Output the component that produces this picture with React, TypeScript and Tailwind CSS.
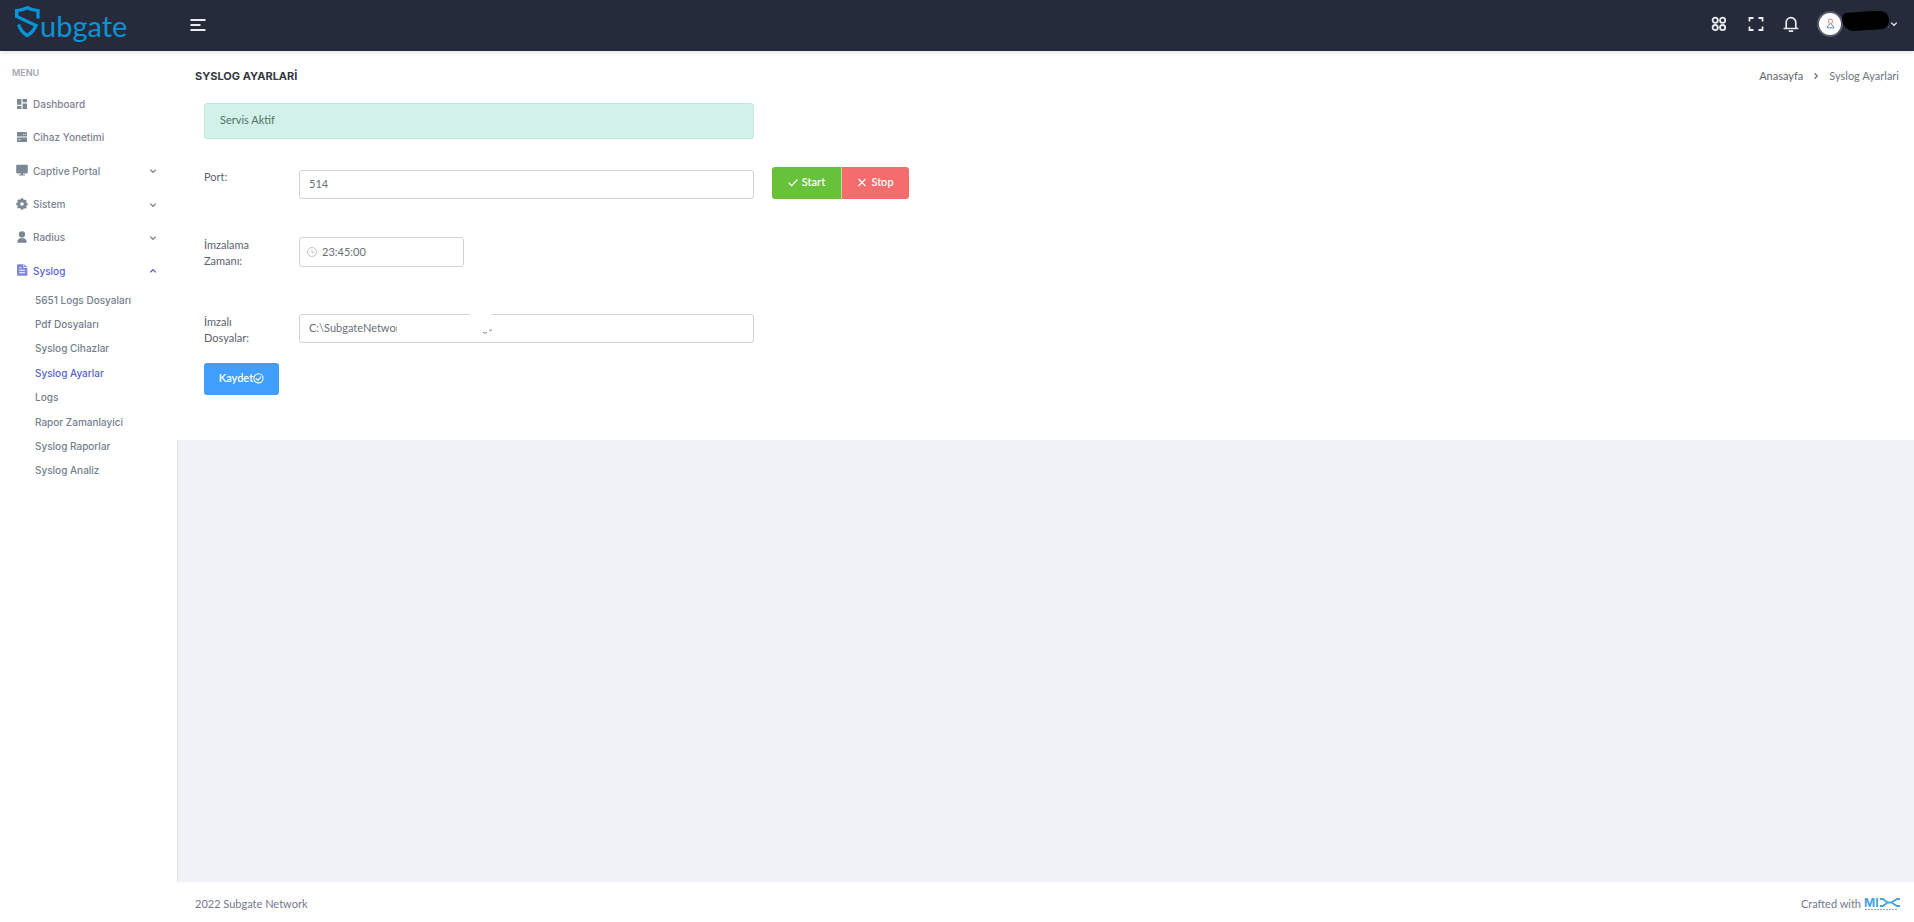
import { useState, type ReactNode } from "react";

const iconClass = "size-3 shrink-0 fill-current";

function DashboardIcon() {
  return (
    <svg viewBox="0 0 12 12" className={iconClass} aria-hidden="true">
      <path d="M1 1h4.400v5.800H1zM6.600 1H11v3.200H6.600zM1 8h4.400v3H1zM6.600 5.400H11V11H6.600z" />
    </svg>
  );
}

function ServerIcon() {
  return (
    <svg viewBox="0 0 12 12" className={iconClass} aria-hidden="true">
      <path
        fillRule="evenodd"
        d="M1.600 1h8.800q.6 0 .6.600v3.800H1V1.600q0-.6.600-.6zM1 6.600h10v3.800q0 .6-.6.600H1.600q-.6 0-.6-.6zM7.200 2.700v1h1v-1zM9 2.700v1h1v-1zM2.600 8.300v1h1.800v-1z"
      />
    </svg>
  );
}

function MonitorIcon() {
  return (
    <svg viewBox="0 0 12 12" className={iconClass} aria-hidden="true">
      <path d="M1 .8h10q.8 0 .8.800v7q0 .8-.8.800H7v1h2v1H3v-1h2v-1H1q-.8 0-.8-.8v-7Q.2.800 1 .800z" />
    </svg>
  );
}

function GearIcon() {
  return (
    <svg viewBox="0 0 12 12" className={iconClass} aria-hidden="true">
      <path
        fillRule="evenodd"
        d="M5 .3h2l.4 1.300 1.200.5L9.800 1.400l.8 1.500-.5 1.100.5 1 1.200.4v1.500l-1.200.5-.4 1 .5 1.300-1.200 1-1.200-.5-1 .5L7 11.700H5l-.4-1.200-1.100-.5-1.200.6-1.200-1.100.6-1.200-.4-1L.2 6.900V5.100l1.200-.4.500-1.100-.6-1.200 1.200-1.200 1.200.600 1-.4zM6 4.200a1.800 1.800 0 1 0 0 3.600 1.800 1.800 0 0 0 0-3.600z"
      />
    </svg>
  );
}

function PersonIcon() {
  return (
    <svg viewBox="0 0 12 12" className={iconClass} aria-hidden="true">
      <circle cx="6" cy="3.400" r="3.100" />
      <path d="M1.400 11.800v-1.200C1.400 8.600 3 7.300 4.800 7.300h2.400c1.800 0 3.400 1.300 3.400 3.300v1.200z" />
    </svg>
  );
}

function FileIcon() {
  return (
    <svg viewBox="0 0 12 12" className={iconClass} aria-hidden="true">
      <path
        fillRule="evenodd"
        d="M2 .3h5.500v3.600h3.900v7.200q0 .7-.7.700H2q-1 0-1-1V1.300q0-1 1-1zM8.300.3l3.100 3h-3.100zM3.300 3.300v1h2v-1zM3.300 5.800v1h5.600v-1zM3.300 8.300v1h5.600v-1z"
      />
    </svg>
  );
}

function Chevron({ className }: { className: string }) {
  return (
    <svg viewBox="0 0 8 8" className={className} fill="none" stroke="currentColor" strokeWidth="1.300" aria-hidden="true">
      <path d="M1.200 2.600 4 5.300l2.800-2.700" />
    </svg>
  );
}

type MenuItem = { label: string; icon: ReactNode; expandable?: boolean };

const menu: MenuItem[] = [
  { label: "Dashboard", icon: <DashboardIcon /> },
  { label: "Cihaz Yonetimi", icon: <ServerIcon /> },
  { label: "Captive Portal", icon: <MonitorIcon />, expandable: true },
  { label: "Sistem", icon: <GearIcon />, expandable: true },
  { label: "Radius", icon: <PersonIcon />, expandable: true },
  { label: "Syslog", icon: <FileIcon />, expandable: true },
];

const syslogPages = [
  "5651 Logs Dosyaları",
  "Pdf Dosyaları",
  "Syslog Cihazlar",
  "Syslog Ayarlar",
  "Logs",
  "Rapor Zamanlayici",
  "Syslog Raporlar",
  "Syslog Analiz",
];

function Logo() {
  return (
    <a href="#home" aria-label="Subgate" className="flex h-full w-[177px] shrink-0 items-start pt-[5px] pl-[14px] text-[#0b93d8]">
      <svg viewBox="0 0 26 34" className="h-[34px] w-[26px] shrink-0" fill="none" stroke="currentColor" strokeWidth="3.400" aria-hidden="true">
        <path d="M24 13.500V5.600Q17.500 5.200 13.300 2.800 9 5.200 2.700 5.600V11.500L22 20.500Q19 27.500 13.200 30.500 7 27 4.500 19.500" />
      </svg>
      <span className="pt-[5px] font-['Lato'] text-[29px] leading-8">ubgate</span>
    </a>
  );
}

function Header() {
  return (
    <header className="relative z-10 flex h-[51px] shrink-0 items-center bg-[#252b3b] text-[#e9ecef] shadow-[0_2px_4px_rgba(15,34,58,0.12)]">
      <Logo />
      <button type="button" aria-label="Toggle menu" className="ml-[11px] flex h-8 w-5 items-center justify-center pb-[2px]">
        <svg viewBox="0 0 16 14" className="h-[14px] w-4" stroke="currentColor" strokeWidth="1.800" aria-hidden="true">
          <path d="M.5 2h15M.5 7h10M.5 12h15" />
        </svg>
      </button>
      <div className="ml-auto flex items-center pr-4 pb-1">
        <button type="button" aria-label="Apps" className="mr-[21px]">
          <svg viewBox="0 0 16 16" className="size-4" fill="none" stroke="currentColor" strokeWidth="1.800" aria-hidden="true">
            <circle cx="4.200" cy="4.200" r="2.600" />
            <circle cx="11.600" cy="4.200" r="2.600" />
            <circle cx="4.200" cy="11.600" r="2.600" />
            <circle cx="11.600" cy="11.600" r="2.600" />
          </svg>
        </button>
        <button type="button" aria-label="Fullscreen" className="mr-[19px]">
          <svg viewBox="0 0 16 16" className="size-4" fill="none" stroke="currentColor" strokeWidth="1.800" aria-hidden="true">
            <path d="M1.500 5.500V2h4M10.500 2h4v3.500M14.500 10.500V14h-4M5.500 14h-4v-3.500" />
          </svg>
        </button>
        <button type="button" aria-label="Notifications" className="mr-[18px]">
          <svg viewBox="0 0 16 16" className="size-4" fill="none" stroke="currentColor" strokeWidth="1.700" aria-hidden="true">
            <path d="M.6 12.500h14.800M3.200 12.500V6.500a4.800 4.800 0 0 1 9.600 0v6M5.800 15.200h4.400" />
          </svg>
        </button>
        <button type="button" aria-label="Account" className="flex items-center">
          <span className="flex size-[26px] items-center justify-center rounded-full border-2 border-[#555b6c] bg-white">
            <svg viewBox="0 0 10 12" className="h-[11px] w-[9px]" fill="none" strokeWidth="1" aria-hidden="true">
              <circle cx="5" cy="3.600" r="2.400" stroke="#f0714f" />
              <path d="M3.800 6.500 3.600 7.600Q1.500 8.200 1.200 10.800h7.600Q8.500 8.200 6.400 7.600L6.200 6.500" stroke="#5878a8" />
            </svg>
          </span>
          <svg viewBox="0 0 48 22" className="-mt-[6px] -ml-px h-[22px] w-12" aria-hidden="true">
            <path d="M3 3Q16 2 30 1h9Q46 2 47 9q0 8-6 10-9 1-17 1-8 1-13 1Q1 19 0 10q0-5 3-7z" fill="#000" />
            <path d="M46 17h1" stroke="#8b90a0" />
          </svg>
          <Chevron className="size-2" />
        </button>
      </div>
    </header>
  );
}

function Sidebar() {
  const [open, setOpen] = useState(true);
  return (
    <nav className="w-[177px] shrink-0 bg-white pt-[14px] font-['Inter'] text-[10px] font-medium text-[#7b8190] shadow-[0_0_2px_rgba(15,34,58,0.16)]">
      <p className="mb-[7px] pl-3 text-[9px] leading-4 font-semibold text-[#a3a7af]">MENU</p>
      <ul className="grid h-[200px] auto-rows-fr">
        {menu.map((item) => {
          const active = item.label === "Syslog";
          const body = (
            <>
              <span className={active ? "pb-[2px] text-[#7f87df]" : "pb-[2px] text-[#7c8794]"}>{item.icon}</span>
              <span>{item.label}</span>
            </>
          );
          const row = "flex w-full items-center gap-[5px] pr-5 pl-4";
          return (
            <li key={item.label} className="flex">
              {item.expandable ? (
                <button
                  type="button"
                  aria-expanded={active && open}
                  onClick={() => active && setOpen(!open)}
                  className={active ? `${row} text-[#5664d2]` : row}
                >
                  {body}
                  <Chevron className={active && open ? "ml-auto size-2 rotate-180" : "ml-auto size-2"} />
                </button>
              ) : (
                <a href="#menu" className={row}>
                  {body}
                </a>
              )}
            </li>
          );
        })}
      </ul>
      {open && (
        <ul className="grid h-[195px] auto-rows-fr text-[#74808c]">
          {syslogPages.map((page) => (
            <li key={page} className="flex">
              <a
                href="#syslog"
                className={page === "Syslog Ayarlar" ? "flex w-full items-center pl-[35px] text-[#5664d2]" : "flex w-full items-center pl-[35px]"}
              >
                {page}
              </a>
            </li>
          ))}
        </ul>
      )}
    </nav>
  );
}

const fieldClass = "h-[29px] w-full rounded-[3px] border border-[#ced4da] bg-white px-[9px] pb-[2px] text-[11px] text-[#6a6f77] outline-none";
const labelClass = "w-[95px] shrink-0 pr-6 leading-4";

function SettingsForm() {
  return (
    <form className="pb-[45px] pl-[9px] text-[11px] text-[#5b626b]" onSubmit={(e) => e.preventDefault()}>
      <div className="grid grid-cols-[1fr_2fr]">
        <div className="pr-2 pl-[18px]">
          <div role="status" className="flex h-9 items-center rounded-[3px] border border-[#bfe9dc] bg-[#d2f1e8] px-[15px] pb-px text-[#4f7268]">
            Servis Aktif
          </div>
        </div>
      </div>

      <div className="mt-7 grid grid-cols-[1fr_2fr]">
        <div className="flex pr-2 pl-[18px]">
          <label htmlFor="port" className={`${labelClass} pt-[2px]`}>
            Port:
          </label>
          <div className="w-full pt-[3px]">
            <input id="port" type="text" defaultValue="514" className={fieldClass} />
          </div>
        </div>
        <div className="flex pl-[10px] font-semibold text-white">
          <button type="button" className="flex h-8 w-[70px] items-center justify-center gap-1 rounded-l-[3px] border-r border-[#b3e09c] bg-[#67c23a] pb-px">
            <svg viewBox="0 0 10 10" className="size-[10px]" fill="none" stroke="currentColor" strokeWidth="1.200" aria-hidden="true">
              <path d="m.6 4.700 3 3L9.500 1.500" />
            </svg>
            Start
          </button>
          <button type="button" className="flex h-8 w-[67px] items-center justify-center gap-1 rounded-r-[3px] bg-[#f56c6c] pb-px">
            <svg viewBox="0 0 10 10" className="size-[10px]" fill="none" stroke="currentColor" strokeWidth="1.200" aria-hidden="true">
              <path d="m1.500 1 7 7M8.500 1l-7 7" />
            </svg>
            Stop
          </button>
        </div>
      </div>

      <div className="mt-[38px] grid grid-cols-[1fr_2fr]">
        <div className="flex pr-2 pl-[18px]">
          <label htmlFor="sign-time" className={labelClass}>
            İmzalama Zamanı:
          </label>
          <div className="relative w-[165px]">
            <svg viewBox="0 0 12 12" className="absolute top-[10px] left-2 size-[10px]" fill="none" stroke="#b4b9c2" aria-hidden="true">
              <circle cx="6" cy="6" r="5.400" />
              <path d="M6 2.800V6.500h2.800" />
            </svg>
            <input
              id="sign-time"
              type="text"
              defaultValue="23:45:00"
              className="h-[30px] w-full rounded-[3px] border border-[#ced4da] bg-white pr-2 pb-[2px] pl-[22px] text-[11px] text-[#6a6f77] outline-none"
            />
          </div>
        </div>
      </div>

      <div className="mt-[45px] grid grid-cols-[1fr_2fr]">
        <div className="flex pr-2 pl-[18px]">
          <label htmlFor="signed-files" className={labelClass}>
            İmzalı Dosyalar:
          </label>
          <div className="relative w-full">
            <input id="signed-files" type="text" defaultValue="C:\SubgateNetwor" className={fieldClass} />
            <svg viewBox="0 0 100 30" className="pointer-events-none absolute top-0 left-[98px] h-[30px] w-[100px]" aria-hidden="true">
              <path d="M0 4H68L74-1H95V26H0z" fill="#fff" />
              <path d="M86 18.500q2 1.300 4 0M92 16q2 1.500 3-.5" fill="none" stroke="#7d838b" />
            </svg>
          </div>
        </div>
      </div>

      <button type="submit" className="mt-[17px] ml-[18px] flex h-8 w-[75px] items-center justify-center rounded-[3px] bg-[#409eff] pb-px font-semibold text-white">
        Kaydet
        <svg viewBox="0 0 12 12" className="size-[11px]" fill="none" stroke="currentColor" strokeWidth="1.200" aria-hidden="true">
          <circle cx="6" cy="5.800" r="5" />
          <path d="m3.200 5.800 2.200 2.200 3.600-4" />
        </svg>
      </button>
    </form>
  );
}

function Footer() {
  return (
    <footer className="flex h-10 items-center justify-between bg-white pt-1 pr-[15px] pl-[18px] text-[11px] text-[#74788d]">
      <span>2022 Subgate Network</span>
      <span className="flex items-center gap-[3px]">
        Crafted with
        <span className="relative flex h-3 w-[35px] items-start text-[#48a5dc]">
          <span className="font-['Inter'] text-[12px] leading-[9px] font-bold">MI</span>
          <svg viewBox="0 0 20 9" className="ml-px h-[9px] w-5 shrink-0" fill="none" stroke="currentColor" strokeWidth="1.900" aria-hidden="true">
            <path d="M0 1h3L7.500 4.500 3 8H0M20 1h-3L11.500 4.500 17 8h3M6 4.500h7" />
          </svg>
          <svg viewBox="0 0 34 2" className="absolute bottom-0 left-0 h-[2px] w-[34px]" stroke="#9aa0a8" aria-hidden="true">
            <path d="M1 1.500h33" strokeDasharray="2 1" />
          </svg>
        </span>
      </span>
    </footer>
  );
}

export default function App() {
  return (
    <div className="flex min-h-screen flex-col bg-[#eff3f7] font-['Lato',sans-serif]">
      <Header />
      <div className="flex flex-1">
        <Sidebar />
        <div className="flex min-w-0 flex-1 flex-col">
          <main className="bg-white">
            <div className="flex h-[52px] items-center justify-between pr-[15px] pb-[2px] pl-[18px]">
              <h1 className="font-['Inter'] text-[11px] font-bold text-[#343a40]">SYSLOG AYARLARİ</h1>
              <nav aria-label="Breadcrumb" className="flex items-center gap-[9px] text-[11px] text-[#6c757d]">
                <a href="#home" className="text-[#5f666e]">
                  Anasayfa
                </a>
                <Chevron className="size-2 -rotate-90" />
                <span>Syslog Ayarlari</span>
              </nav>
            </div>
            <SettingsForm />
          </main>
          <div className="flex-1" />
          <Footer />
        </div>
      </div>
    </div>
  );
}
